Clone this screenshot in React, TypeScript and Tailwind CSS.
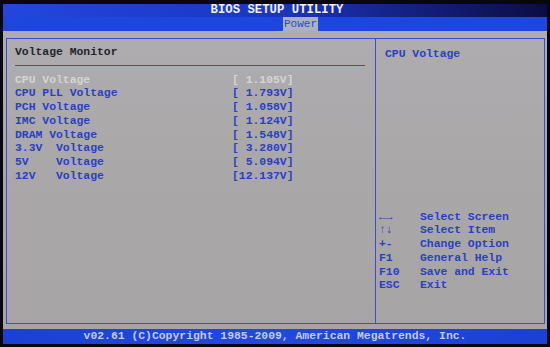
import React from 'react';

const items: [string, string][] = [
  ['CPU Voltage', '[ 1.105V]'],
  ['CPU PLL Voltage', '[ 1.793V]'],
  ['PCH Voltage', '[ 1.058V]'],
  ['IMC Voltage', '[ 1.124V]'],
  ['DRAM Voltage', '[ 1.548V]'],
  ['3.3V  Voltage', '[ 3.280V]'],
  ['5V    Voltage', '[ 5.094V]'],
  ['12V   Voltage', '[12.137V]'],
];

const help: [string, string][] = [
  ['←→', 'Select Screen'],
  ['↑↓', 'Select Item'],
  ['+-', 'Change Option'],
  ['F1', 'General Help'],
  ['F10', 'Save and Exit'],
  ['ESC', 'Exit'],
];

const mono = "font-['Liberation_Mono',monospace]";

const App: React.FC = (): JSX.Element => {
  return (
    <div className={`flex h-[347px] w-[550px] flex-col bg-[#07070d] ${mono}`}>
      {/* title bar */}
      <div className="ml-[3px] mr-[3px] mt-[4px] flex h-[13px] items-center justify-center bg-gradient-to-r from-[#2446dc] via-[#1a36c2] to-[#0c0c44]">
        <span className="pl-[4px] text-[12.3px] font-bold leading-none text-[#eef0ff]">
          BIOS SETUP UTILITY
        </span>
      </div>

      {/* tab bar */}
      <div className="ml-[3px] mr-[3px] flex h-[14px] bg-[#1c46de] pl-[280px]">
        <div className="flex h-full w-[35px] items-center justify-center bg-[#aab0c6] text-[11px] leading-none text-[#2f48c8]">
          Power
        </div>
      </div>

      {/* body */}
      <div className="ml-[3px] mr-[3px] flex flex-1 bg-gradient-to-b from-[#aeacae] via-[#a9a7a8] to-[#a6a4a4] pb-[5px] pl-[3px] pr-[2px] pt-[7px]">
        <div className="flex flex-1 border border-[#3a4cd0]">
          {/* left panel */}
          <div className="flex w-[369px] flex-col border-r border-[#3a4cd0] pl-[8px] pr-[10px] pt-[7px] text-[11.4px] font-bold leading-[13.7px]">
            <div className="text-[#24242e]">Voltage Monitor</div>
            <div className="mt-[5px] h-px bg-[#3a4cd0]" />
            <div className="mt-[8px] flex flex-col">
              {items.map(([name, value], i) => (
                <div
                  key={name}
                  className={`flex whitespace-pre ${i === 0 ? 'text-[#d4d4da]' : 'text-[#2a40c4]'}`}
                >
                  <span className="w-[217px]">{name}</span>
                  <span>{value}</span>
                </div>
              ))}
            </div>
          </div>

          {/* right panel */}
          <div className="flex flex-1 flex-col pl-[9px] pt-[9px] text-[11.4px] font-bold leading-[13.7px] text-[#2a40c4]">
            <div>CPU Voltage</div>
            <div className="mt-auto mb-[30px] -ml-[6px] flex flex-col">
              {help.map(([key, label]) => (
                <div key={key} className="flex whitespace-pre">
                  <span className="w-[41px]">{key}</span>
                  <span>{label}</span>
                </div>
              ))}
            </div>
          </div>
        </div>
      </div>

      {/* footer */}
      <div className="ml-[3px] mr-[3px] mb-[3px] flex h-[15px] items-center justify-center bg-gradient-to-r from-[#1a40d6] via-[#2248e0] to-[#1a40d6]">
        <span className="text-[11.4px] font-bold leading-none text-[#c6c8ec]">
          v02.61 (C)Copyright 1985-2009, American Megatrends, Inc.
        </span>
      </div>
    </div>
  );
};

export default App;
